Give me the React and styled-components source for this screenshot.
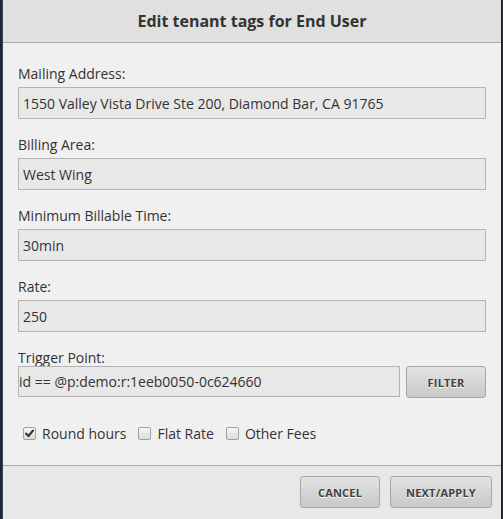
import React from "react";
import styled, { createGlobalStyle } from "styled-components";

const Global = createGlobalStyle`
  html, body { margin: 0; padding: 0; background: #1c2637; }
  body { font-family: "Open Sans", "Liberation Sans", sans-serif; }
  * { box-sizing: border-box; }
`;

const Dialog = styled.div`
  margin-left: 2px;
  width: 499px;
  height: 519px;
  background: #f0f0f0;
  border-left: 1px solid #3a4556;
  display: flex;
  flex-direction: column;
  overflow: hidden;
`;

const Header = styled.div`
  height: 43px;
  flex: none;
  background: #e0e0e0;
  border-bottom: 1px solid #a9a9a9;
  display: flex;
  align-items: center;
  justify-content: center;
  font-weight: 700;
  font-size: 16px;
  color: #333;
  padding-bottom: 1px;
`;

const Body = styled.div`
  flex: none;
  padding: 21px 15px 22px 15px;
  display: flex;
  flex-direction: column;
  gap: 16px;
`;

const Field = styled.div`
  display: flex;
  flex-direction: column;
`;

const Label = styled.div`
  font-size: 14px;
  line-height: 19px;
  color: #333;
  margin-bottom: ${(p) => p.$gap}px;
`;

const Row = styled.div`
  display: flex;
  gap: 6px;
`;

const Input = styled.div`
  flex: 1 1 auto;
  min-width: 0;
  height: ${(p) => p.$h || 32}px;
  background: #e8e8e8;
  border: 1px solid #b4b4b4;
  font-size: 14px;
  color: #333;
  display: flex;
  align-items: center;
  padding-left: ${(p) => p.$pad}px;
  white-space: nowrap;
`;

const Button = styled.div`
  flex: none;
  width: ${(p) => p.$w}px;
  height: 32px;
  border: 1px solid #a6a6a6;
  border-radius: 3px;
  background: linear-gradient(#e2e2e2, #c9c9c9);
  display: flex;
  align-items: center;
  justify-content: center;
  font-size: 11px;
  font-weight: 700;
  color: #404040;
  text-shadow: 0 1px 0 #fff;
  letter-spacing: 0.2px;
`;

const Checks = styled.div`
  display: flex;
  align-items: center;
  margin-top: 10px;
  padding-left: 5px;
`;

const Check = styled.label`
  display: flex;
  align-items: center;
  font-size: 14px;
  line-height: 19px;
  color: #333;
  margin-right: 12px;
`;

const Box = styled.span`
  width: 13px;
  height: 13px;
  border: 1px solid #a0a0a0;
  border-radius: 2px;
  background: linear-gradient(#f6f6f6, #dcdcdc);
  margin-right: 6px;
  display: flex;
  align-items: center;
  justify-content: center;
`;

const Footer = styled.div`
  flex: 1;
  background: #e8e8e8;
  border-top: 1px solid #a9a9a9;
  display: flex;
  justify-content: flex-end;
  align-items: flex-start;
  gap: 10px;
  padding: 10px 9px 0 0;
`;

const Tick = () => (
  <svg width="11" height="11" viewBox="0 0 11 11">
    <path d="M2 5.5 L4.5 8 L9 2.5" fill="none" stroke="#333" strokeWidth="2" strokeLinecap="round" strokeLinejoin="round" />
  </svg>
);

const fields = [
  ["Mailing Address:", "1550 Valley Vista Drive Ste 200, Diamond Bar, CA 91765"],
  ["Billing Area:", "West Wing"],
  ["Minimum Billable Time:", "30min"],
  ["Rate:", "250"],
];

export default function App() {
  return (
    <>
      <Global />
      <Dialog>
        <Header>Edit tenant tags for End User</Header>
        <Body>
          {fields.map(([l, v]) => (
            <Field key={l}>
              <Label $gap={4}>{l}</Label>
              <Input $pad={4}>{v}</Input>
            </Field>
          ))}
          <Field>
            <Label $gap={-1}>Trigger Point:</Label>
            <Row>
              <Input $pad={0} $h={31}>id == @p:demo:r:1eeb0050-0c624660</Input>
              <Button $w={80}>FILTER</Button>
            </Row>
          </Field>
          <Checks>
            <Check><Box><Tick /></Box>Round hours</Check>
            <Check><Box />Flat Rate</Check>
            <Check><Box />Other Fees</Check>
          </Checks>
        </Body>
        <Footer>
          <Button $w={80}>CANCEL</Button>
          <Button $w={102}>NEXT/APPLY</Button>
        </Footer>
      </Dialog>
    </>
  );
}
